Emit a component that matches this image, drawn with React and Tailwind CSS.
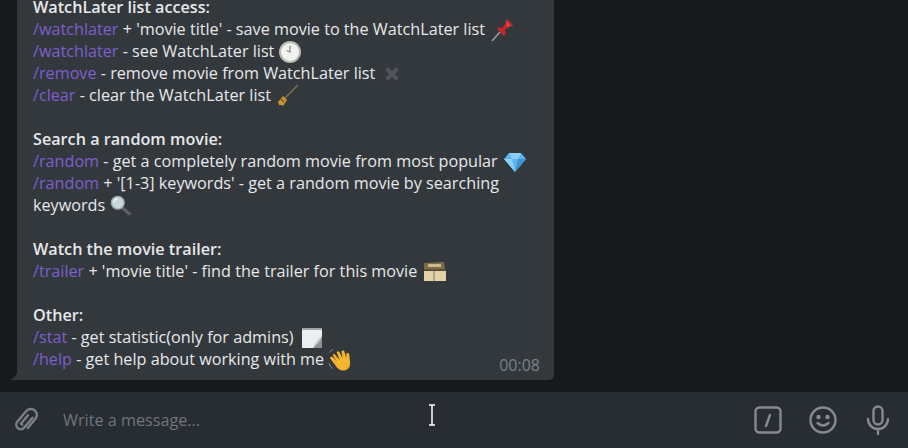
import React from "react";

const Cmd = ({ children }) => <span className="text-[#7e5fd0]">{children}</span>;
const Line = ({ children, bold }) => (
  <div className={bold ? "h-[22px] font-semibold whitespace-nowrap" : "h-[22px] whitespace-nowrap"}>{children}</div>
);

const Pin = () => (
  <svg width="24" height="24" viewBox="0 0 24 24" className="inline-block align-[-1px] -my-[6px] ml-[2px]">
    <path d="M1 23 L9 14" stroke="#9aa0a8" strokeWidth="1.5" />
    <path d="M6 11 L13 18 L15 16 L14 12 L19 8 L21 8.5 L22 7 L16 1 L14.5 2.5 L15 5 L11 10 L8 9 Z" fill="#c0272d" />
    <path d="M15 3 L20 8 L16 9 Z" fill="#dd4a45" />
  </svg>
);
const Clock = () => (
  <svg width="22" height="22" viewBox="0 0 22 22" className="inline-block align-[0px] -my-[6px]">
    <circle cx="11" cy="11" r="11" fill="#b9b9b6" />
    <circle cx="11" cy="11" r="9" fill="#f1f1ee" />
    <path d="M11 4.5 V11 L7.5 9.5" stroke="#8b8d90" strokeWidth="1.3" fill="none" />
  </svg>
);
const Cross = () => (
  <svg width="16" height="16" viewBox="0 0 16 16" className="inline-block align-[3px] -my-[6px] ml-[4px]">
    <path d="M2.5 2.5 L13.5 13.5 M13.5 2.5 L2.5 13.5" stroke="#4f5358" strokeWidth="4" />
  </svg>
);
const Broom = () => (
  <svg width="24" height="24" viewBox="0 0 24 24" className="inline-block align-[-1px] -my-[6px]">
    <path d="M10 14 L23 1" stroke="#8a7350" strokeWidth="1.2" />
    <path d="M3 18 L8 12 L12 16 L8 22 L6 21 L4 21 Z" fill="#c9952f" />
    <path d="M6 15 L9 18" stroke="#6e4f1c" strokeWidth="1.2" />
  </svg>
);
const Gem = () => (
  <svg width="22" height="20" viewBox="0 0 22 20" className="inline-block align-[1px] -my-[6px] ml-[2px]">
    <path d="M5 1 H17 L22 7 L11 20 L0 7 Z" fill="#5fb3ee" />
    <path d="M5 1 L8 7 H14 L17 1 Z M0 7 H8 L11 20 Z" fill="#8cd0f7" />
    <path d="M14 7 H22 L11 20 Z" fill="#3f94d8" />
  </svg>
);
const Glass = () => (
  <svg width="22" height="21" viewBox="0 0 24 22" className="inline-block align-[1px] -my-[6px] ml-[1px]">
    <path d="M13 13 L21 20" stroke="#5c5f63" strokeWidth="3.5" strokeLinecap="round" />
    <circle cx="8.5" cy="8" r="7" fill="#c9d6de" stroke="#a5a8ab" strokeWidth="1.5" />
    <path d="M4 7 A5 5 0 0 1 8 3.5" stroke="#f1f5f7" strokeWidth="1.5" fill="none" />
  </svg>
);
const Box = () => (
  <svg width="24" height="22" viewBox="0 0 24 22" className="inline-block align-[0px] -my-[6px] ml-[1px]">
    <path d="M1 2 L21 1 L22 9 H1 Z" fill="#7d6c4a" />
    <path d="M5 3 H18 V6 H5 Z" fill="#ccb98e" />
    <path d="M1 10 H23 V20 H1 Z" fill="#e2d2a8" />
    <path d="M11 10 V20" stroke="#9d8a62" strokeWidth="1.2" />
    <path d="M1 9 H23" stroke="#5b4d33" strokeWidth="1.5" />
  </svg>
);
const Note = () => (
  <svg width="22" height="22" viewBox="0 0 22 22" className="inline-block align-[0px] -my-[6px] ml-[3px]">
    <path d="M1 1 H21 V21 H1 Z" fill="#eceef0" />
    <path d="M1 1 H21 V3 H1 Z" fill="#9fa2a6" />
    <path d="M21 9 L12 21 H21 Z" fill="#8e9297" />
    <path d="M21 9 C19 15 16 17 12 21 C15 16 14 15 21 9 Z" fill="#c9ccd0" />
  </svg>
);
const Wave = () => (
  <svg width="25" height="24" viewBox="0 0 26 24" className="inline-block align-[-1px] -my-[6px]">
    <path d="M7 6 L12 12 L9 4 Q10 2 12 4 L15 10 L14 3 Q16 1 17 3 L19 10 L19 5 Q21 4 22 6 L23 15 Q23 22 16 23 Q11 23 8 18 L2 10 Q3 8 5 9 L9 13 L5 7 Q6 5 7 6 Z" fill="#f5b52e" />
    <path d="M16 23 Q21 22 23 15 L23 18 Q21 23 16 23 Z" fill="#d98f1c" />
    <path d="M1 15 Q2 19 5 21 M5 1 Q3 2 2 4" stroke="#8b8f94" strokeWidth="1" fill="none" />
  </svg>
);

export default function App() {
  return (
    <div className="w-[908px] h-[448px] overflow-hidden flex flex-col bg-[#17191d] relative font-['Open_Sans',sans-serif]">
      <div className="h-[392px] flex flex-col justify-end overflow-hidden pb-[12px] shrink-0">
        <div className="relative ml-[17px] w-[537px] shrink-0 bg-[#33383d] rounded-br-[5px] pl-[16px] pb-[10px] text-[16.2px] leading-[22px] text-[#e6e8ea]">
          <svg width="8" height="10" viewBox="0 0 8 10" className="absolute left-[-7px] bottom-0">
            <path d="M8 0 V10 H0 Q6 8 8 0 Z" fill="#33383d" />
          </svg>
          <Line bold>WatchLater list access:</Line>
          <Line><Cmd>/watchlater</Cmd> + 'movie title' - save movie to the WatchLater list <Pin /></Line>
          <Line><Cmd>/watchlater</Cmd> - see WatchLater list <Clock /></Line>
          <Line><Cmd>/remove</Cmd> - remove movie from WatchLater list <Cross /></Line>
          <Line><Cmd>/clear</Cmd> - clear the WatchLater list <Broom /></Line>
          <Line />
          <Line bold>Search a random movie:</Line>
          <Line><Cmd>/random</Cmd> - get a completely random movie from most popular <Gem /></Line>
          <Line><Cmd>/random</Cmd> + '[1-3] keywords' - get a random movie by searching</Line>
          <Line>keywords <Glass /></Line>
          <Line />
          <Line bold>Watch the movie trailer:</Line>
          <Line><Cmd>/trailer</Cmd> + 'movie title' - find the trailer for this movie <Box /></Line>
          <Line />
          <Line bold>Other:</Line>
          <Line><Cmd>/stat</Cmd> - get statistic(only for admins) <Note /></Line>
          <Line><Cmd>/help</Cmd> - get help about working with me <Wave /></Line>
          <span className="absolute right-[14px] bottom-[4px] text-[16px] leading-[22px] text-[#7c8288]">00:08</span>
        </div>
      </div>
      <div className="flex-1 flex items-center bg-[#282d33]">
        <svg width="30" height="32" viewBox="0 0 30 32" className="ml-[11px] shrink-0" fill="none" stroke="#7b8086" strokeWidth="2.4" strokeLinecap="round">
          <path d="M18.5 9 V22 A4.5 4.5 0 0 1 9.5 22 V8 A6 6 0 0 1 21.5 8 V20 M13.5 10 V21 A1.2 1.2 0 0 0 15 21" transform="rotate(40 15 16) translate(0 1)" />
        </svg>
        <div className="ml-[22px] flex-1 text-[16.2px] text-[#6f757c]">Write a message...</div>
        <svg width="28" height="28" viewBox="0 0 28 28" className="shrink-0" fill="none" stroke="#868b91" strokeWidth="2.4">
          <rect x="1.5" y="1.5" width="25" height="25" rx="4" />
          <path d="M16 9 L12 20" strokeLinecap="round" />
        </svg>
        <svg width="28" height="28" viewBox="0 0 28 28" className="ml-[27px] shrink-0" fill="none" stroke="#868b91" strokeWidth="2.4" strokeLinecap="round">
          <circle cx="14" cy="14" r="12.5" />
          <path d="M8.5 17 Q14 22 19.5 17" />
          <circle cx="9.5" cy="11" r="1" fill="#868b91" />
          <circle cx="18.5" cy="11" r="1" fill="#868b91" />
        </svg>
        <svg width="24" height="30" viewBox="0 0 24 30" className="ml-[29px] mr-[18px] shrink-0" fill="none" stroke="#868b91" strokeWidth="2.4" strokeLinecap="round">
          <rect x="7.5" y="1.5" width="9" height="18" rx="4.5" />
          <path d="M2 14 A10 10 0 0 0 22 14 M12 24 V29" />
        </svg>
      </div>
      <svg width="10" height="22" viewBox="0 0 10 22" className="absolute left-[427px] top-[404px]" fill="none">
        <path d="M2 1 H8 M5 1 V21 M2 21 H8" stroke="#ffffff" strokeWidth="1.5" />
      </svg>
    </div>
  );
}
